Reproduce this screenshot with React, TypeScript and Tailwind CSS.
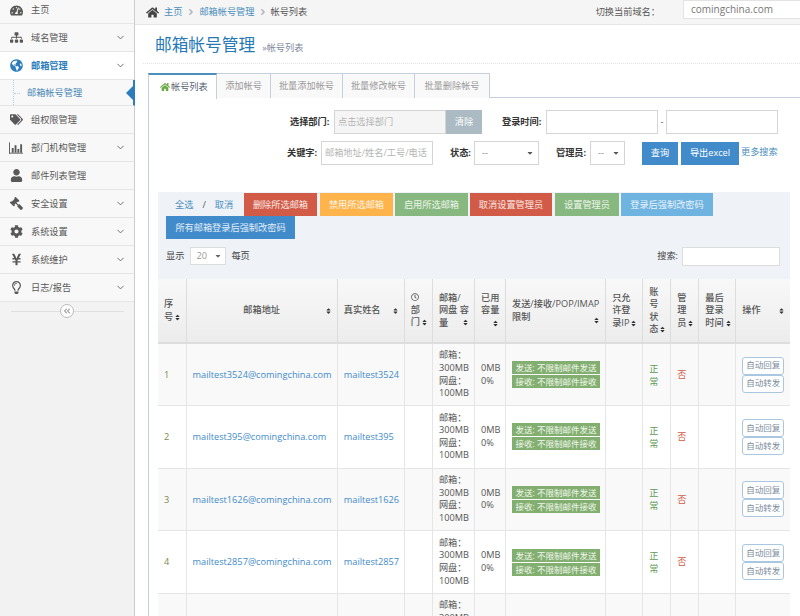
import React from "react";
import { FaTachometerAlt, FaSitemap, FaGlobeAmericas, FaTags, FaUser, FaGavel, FaCog, FaYenSign, FaRegLightbulb, FaHome, FaAngleRight, FaAngleDoubleLeft, FaSort, FaRegClock, FaCaretDown } from "react-icons/fa";
import { ChevronDown } from "lucide-react";

const font = { fontFamily: '"Open Sans","Noto Sans CJK SC",sans-serif' };

const BarChart = ({ className }: { className?: string }) => (
  <svg viewBox="0 0 15 12" width="14" height="12" className={className} fill="currentColor">
    <rect x="0" y="0" width="1" height="12" />
    <rect x="0" y="11" width="15" height="1" />
    <rect x="3" y="6" width="2" height="5" />
    <rect x="6" y="3" width="2" height="8" />
    <rect x="9" y="7" width="2" height="4" />
    <rect x="12" y="2" width="2" height="9" />
  </svg>
);

const Gavel = ({ className }: { className?: string }) => <FaGavel className={`${className ?? ""} -scale-x-100`} />;

const menu = [
  { t: "主页", I: FaTachometerAlt, h: "h-[24px] pb-[3px]", a: false },
  { t: "域名管理", I: FaSitemap, a: true },
  { t: "邮箱管理", I: FaGlobeAmericas, a: true, on: true },
  { t: "组权限管理", I: FaTags, a: false },
  { t: "部门机构管理", I: BarChart, a: true },
  { t: "邮件列表管理", I: FaUser, a: false },
  { t: "安全设置", I: Gavel, a: true },
  { t: "系统设置", I: FaCog, a: true },
  { t: "系统维护", I: FaYenSign, a: true },
  { t: "日志/报告", I: FaRegLightbulb, a: true },
];

function Sidebar() {
  return (
    <div className="w-[135px] shrink-0 bg-[#f2f2f2] border-r border-[#cccccc] h-full">
      {menu.map((m) => (
        <React.Fragment key={m.t}>
          <div className={`${m.h ?? "h-[28px]"} flex items-center border-b border-[#e5e5e5] ${m.on ? "bg-white text-[#2b7dbc] font-bold" : "bg-[#f8f8f8] text-[#585858]"} text-[9.2px] pr-[7px]`}>
            <span className="w-[31px] flex justify-center shrink-0 pl-[1px]"><m.I className="text-[13px]" /></span>
            <span className="flex-1">{m.t}</span>
            {m.a && <ChevronDown size={11} strokeWidth={2} className="mr-[1px] text-[#666666]" />}
          </div>
          {m.on && (
            <div className="h-[26px] relative flex items-center bg-[#f8f8f8] border-b border-[#e5e5e5] pl-[27px] text-[9.2px] text-[#4b88b7] border-r-2 border-r-[#2b7dbc] -mr-[1px]">
              <span className="absolute left-[13px] top-0 bottom-0 border-l border-dotted border-[#b5cfe3]" />
              <span className="absolute left-[14px] top-[13px] w-[6px] border-t border-dotted border-[#b5cfe3]" />
              邮箱帐号管理
              <span className="absolute right-0 top-[6px] w-0 h-0 border-y-[7px] border-y-transparent border-r-[7px] border-r-[#2b7dbc]" />
            </div>
          )}
        </React.Fragment>
      ))}
      <div className="h-[18px] bg-[#f3f3f3] relative flex items-center justify-center">
        <span className="absolute left-[11px] right-[10px] top-[9px] border-t border-[#e0e0e0]" />
        <span className="relative w-[14px] h-[14px] rounded-full bg-white border border-[#bbbbbb] flex items-center justify-center text-[#aaaaaa]"><FaAngleDoubleLeft className="text-[8px]" /></span>
      </div>
    </div>
  );
}

function TopBar() {
  return (
    <div className="h-[25px] bg-[#f5f5f5] border-b border-[#e5e5e5] flex items-center text-[9.2px] shrink-0">
      <FaHome className="ml-[11px] text-[13px] text-[#444444]" />
      <span className="ml-[5px] text-[#4c8fbd]">主页</span>
      <FaAngleRight className="mx-[3.5px] text-[10px] text-[#b2b6bf]" />
      <span className="text-[#4c8fbd]">邮箱帐号管理</span>
      <FaAngleRight className="mx-[3px] text-[10px] text-[#b2b6bf]" />
      <span className="text-[#555555]">帐号列表</span>
      <span className="ml-auto mr-[23px] text-[#555555] text-[9.2px]">切换当前域名：</span>
      <div className="w-[123px] -mr-[6px] h-[19px] -mt-[6px] bg-white border border-[#e3e3e3] flex items-center pl-[7px] text-[#777777] text-[10px]">
        comingchina.com
      </div>
    </div>
  );
}

function Input({ w, ph, bg }: { w: string; ph?: string; bg?: string }) {
  return <div className={`${w} ${bg ?? "bg-white"} h-[24px] border border-[#d5d5d5] flex items-center px-[3px] text-[9.2px] text-[#b5b5b5] overflow-hidden whitespace-nowrap`}>{ph}</div>;
}

function Sel({ w }: { w: string }) {
  return (
    <div className={`${w} h-[24px] bg-white border border-[#d5d5d5] flex items-center justify-between pl-[7px] pr-[4px] text-[9.2px] text-[#888888]`}>
      <span>--</span><FaCaretDown className="text-[8px] text-[#555555]" />
    </div>
  );
}

function Tabs() {
  const others = [["添加帐号", "w-[54px]"], ["批量添加帐号", "w-[72px]"], ["批量修改帐号", "w-[72px]"], ["批量删除帐号", "w-[75px]"]];
  return (
    <div className="flex h-[25px] ml-[13px] mt-[9px] relative z-10 text-[9.2px] whitespace-nowrap">
      <div className="w-[69px] h-[26px] bg-white border-x border-[#c5d0dc] border-t-2 border-t-[#4c8fbd] flex items-center pl-[11px] text-[#576373]">
        <FaHome className="text-[10px] text-[#69aa46] mr-[1px]" />帐号列表
      </div>
      {others.map(([t, w]) => (
        <div key={t} className={`${w} h-[25px] bg-[#f9f9f9] border-r border-t border-[#c5d0dc] flex items-center justify-center text-[#999999]`}>{t}</div>
      ))}
    </div>
  );
}

function SearchForm() {
  const label = "text-[9.2px] font-bold text-[#333333] whitespace-nowrap";
  return (
    <div className="pt-[12px]">
      <div className="flex items-center h-[24px] pl-[141px]">
        <span className={`${label} w-[44px]`}>选择部门:</span>
        <Input w="w-[112px]" ph="点击选择部门" bg="bg-[#f5f5f5]" />
        <div className="w-[36px] h-[24px] bg-[#abbac3] text-white text-[9.2px] flex items-center justify-center">清除</div>
        <span className={`${label} ml-[20px] w-[44px]`}>登录时间:</span>
        <Input w="w-[112px]" />
        <span className="w-[8px] text-center text-[9.2px] text-[#555555]">-</span>
        <Input w="w-[112px]" />
      </div>
      <div className="flex items-center h-[24px] mt-[7px] pl-[138px]">
        <span className={`${label} w-[34px]`}>关键字:</span>
        <Input w="w-[112px]" ph="邮箱地址/姓名/工号/电话" />
        <span className={`${label} ml-[17px] w-[24px]`}>状态:</span>
        <Sel w="w-[65px]" />
        <span className={`${label} ml-[17px] w-[34px]`}>管理员:</span>
        <Sel w="w-[35px]" />
        <div className="ml-[17px] w-[36px] h-[23px] bg-[#428bca] text-white text-[9.2px] flex items-center justify-center">查询</div>
        <div className="ml-[3px] w-[58px] h-[23px] bg-[#428bca] text-white text-[9.2px] flex items-center justify-center">导出excel</div>
        <span className="ml-[2px] -mt-[2px] text-[9.2px] text-[#4c8fbd] whitespace-nowrap">更多搜索</span>
      </div>
    </div>
  );
}

function Btn({ w, c, t }: { w: string; c: string; t: string }) {
  return <div className={`${w} ${c} h-[23px] text-white/85 text-[9.2px] flex items-center justify-center whitespace-nowrap`}>{t}</div>;
}

function Toolbar() {
  return (
    <div className="bg-[#eff3f8] h-[87px] pl-[8px] pt-px">
      <div className="flex h-[23px]">
        <div className="w-[78px] flex items-center text-[9.2px] text-[#4c8fbd] pl-[9px] whitespace-nowrap">
          <span>全选</span><span className="mx-[9px] text-[#555555]">/</span><span>取消</span>
        </div>
        <Btn w="w-[73px]" c="bg-[#d15b47]" t="删除所选邮箱" />
        <Btn w="w-[73px] ml-[3px]" c="bg-[#ffb44b]" t="禁用所选邮箱" />
        <Btn w="w-[73px] ml-[2px]" c="bg-[#87b87f]" t="启用所选邮箱" />
        <Btn w="w-[82px] ml-[2px]" c="bg-[#d15b47]" t="取消设置管理员" />
        <Btn w="w-[64px] ml-[3px]" c="bg-[#87b87f]" t="设置管理员" />
        <Btn w="w-[92px] ml-[2px]" c="bg-[#6fb3e0]" t="登录后强制改密码" />
      </div>
      <Btn w="w-[129px]" c="bg-[#428bca]" t="所有邮箱登录后强制改密码" />
      <div className="flex items-center h-[20px] mt-[7px] text-[9.2px] text-[#444444]">
        <span>显示</span>
        <div className="ml-[6px] w-[36px] h-[18px] bg-white border border-[#dddddd] flex items-center justify-between pl-[5px] pr-[3px] text-[#999999]">
          <span>20</span><FaCaretDown className="text-[8px] text-[#666666]" />
        </div>
        <span className="ml-[5px]">每页</span>
        <span className="ml-auto">搜索:</span>
        <div className="ml-[4px] mr-[10px] mt-px w-[98px] h-[19px] bg-white border border-[#dddddd]" />
      </div>
    </div>
  );
}

function Th({ w, children, cls }: { w: string; children: React.ReactNode; cls?: string }) {
  return (
    <th className={`${w} ${cls ?? ""} border-r border-[#dddddd] last:border-r-0 border-b-2 border-b-[#dddddd] font-medium whitespace-nowrap text-[9.2px] leading-[12.5px] text-[#555555] text-left align-middle relative px-[6px] bg-gradient-to-b from-[#f8f8f8] to-[#ececec]`}>
      {children}
    </th>
  );
}

const S = () => <FaSort className="inline text-[7px] text-[#333333] ml-px" />;
const SR = () => <FaSort className="absolute right-[5px] top-1/2 -translate-y-1/2 text-[7px] text-[#333333]" />;

const rows = [
  ["1", "mailtest3524"],
  ["2", "mailtest395"],
  ["3", "mailtest1626"],
  ["4", "mailtest2857"],
  ["5", ""],
];

const tdc = "border-r border-b border-[#e5e5e5] last:border-r-0 px-[6px] align-middle";

function Table() {
  return (
    <table className="table-fixed border-collapse w-[632px] text-[9.2px] text-[#555555]">
      <thead>
        <tr className="h-[64px]">
          <Th w="w-[28px]">序<br />号<S /></Th>
          <Th w="w-[151px]" cls="!text-center">邮箱地址<SR /></Th>
          <Th w="w-[67px]">真实姓名<SR /></Th>
          <Th w="w-[28px]"><FaRegClock className="text-[8px] mb-[3px]" />部<br />门<S /></Th>
          <Th w="w-[42px]">邮箱/<br />网盘 容<br />量<span className="absolute right-[5px] bottom-[14px]"><S /></span></Th>
          <Th w="w-[31px]">已用<br />容量<br /><span className="block text-right"><S /></span></Th>
          <Th w="w-[100px]">发送/接收/POP/IMAP<br />限制<SortEnd /></Th>
          <Th w="w-[37px]">只允<br />许登<br />录IP<S /></Th>
          <Th w="w-[28px]">账<br />号<br />状<br />态<S /></Th>
          <Th w="w-[28px]">管<br />理<br />员<S /></Th>
          <Th w="w-[37px]">最后<br />登录<br />时间<S /></Th>
          <Th w="w-[54px]">操作<SR /></Th>
        </tr>
      </thead>
      <tbody>
        {rows.map(([n, name], i) => (
          <tr key={n} className={`h-[62.6px] ${i % 2 === 0 ? "bg-[#f9f9f9]" : "bg-white"}`}>
            <td className={`${tdc} text-[#7a8a50]`}>{n}</td>
            <td className={`${tdc} text-[#428bca] whitespace-nowrap`}>{name && `${name}@comingchina.com`}</td>
            <td className={`${tdc} text-[#428bca]`}>{name}</td>
            <td className={tdc}></td>
            <td className={`${tdc} leading-[12.6px] !pr-0`}>邮箱：<br />300MB<br />网盘：<br />100MB</td>
            <td className={`${tdc} leading-[12.6px]`}>{name && <>0MB<br />0%</>}</td>
            <td className={tdc}>
              {name && (
                <div className="flex flex-col gap-px">
                  <span className="h-[13px] w-[88px] bg-[#82af6f] text-white/90 text-[8.5px] leading-[13px] text-center whitespace-nowrap">发送: 不限制邮件发送</span>
                  <span className="h-[13px] w-[88px] bg-[#82af6f] text-white/90 text-[8.5px] leading-[13px] text-center whitespace-nowrap">接收: 不限制邮件接收</span>
                </div>
              )}
            </td>
            <td className={tdc}></td>
            <td className={`${tdc} text-[#629b58] leading-[13px]`}>{name && <>正<br />常</>}</td>
            <td className={`${tdc} text-[#d15b47]`}>{name && "否"}</td>
            <td className={tdc}></td>
            <td className={tdc}>
              {name && (
                <div className="flex flex-col">
                  {["自动回复", "自动转发"].map((t) => (
                    <span key={t} className="w-[42px] h-[18px] rounded-[3px] border border-[#a9c7e0] bg-white text-[8.5px] text-[#7a8c9c] flex items-center justify-center whitespace-nowrap">{t}</span>
                  ))}
                </div>
              )}
            </td>
          </tr>
        ))}
      </tbody>
    </table>
  );
}

const SortEnd = () => <FaSort className="absolute right-[5px] bottom-[18px] text-[7px] text-[#333333]" />;

export default function App() {
  return (
    <div className="w-[800px] h-[616px] overflow-hidden flex bg-white" style={font}>
      <Sidebar />
      <div className="flex-1 flex flex-col min-w-0 overflow-hidden">
        <TopBar />
        <div className="pl-[13px] pt-[10px]">
          <div className="flex items-end h-[29px] border-b border-dotted border-[#e2e2e2] pb-[8px] ml-[-5px] pl-[12px]">
            <span className="text-[16.7px] leading-[20px] text-[#2679b5]">邮箱帐号管理</span>
            <span className="ml-[7px] text-[9.2px] text-[#8089a0]">»帐号列表</span>
          </div>
        </div>
        <Tabs />
        <div className="ml-[13px] -mt-px border-l border-t border-[#c5d0dc] flex-1">
          <SearchForm />
          <div className="mt-[27px] ml-[9px] w-[632px]">
            <Toolbar />
            <Table />
          </div>
        </div>
      </div>
    </div>
  );
}
